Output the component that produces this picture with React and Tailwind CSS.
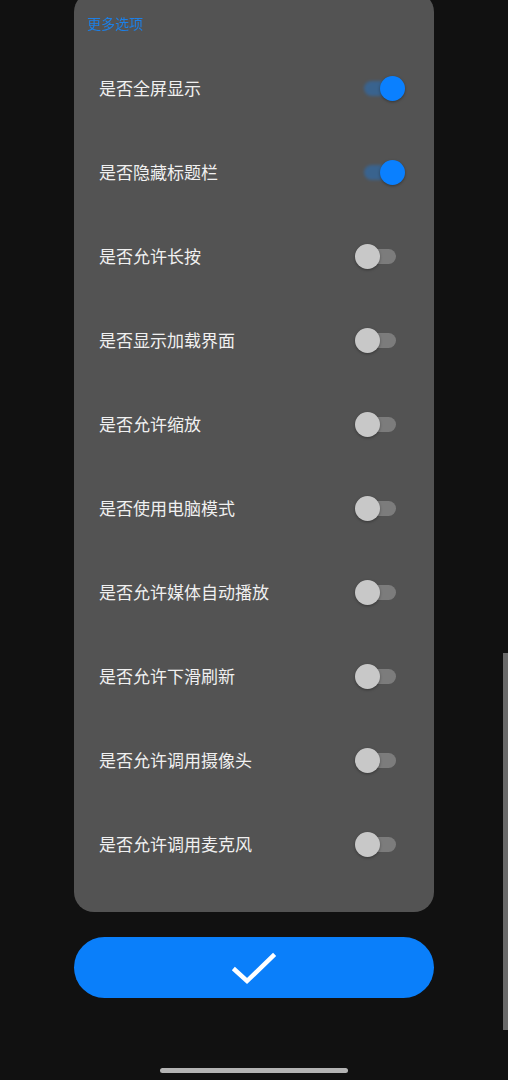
import React from "react";

const rows = [
  { label: "是否全屏显示", on: true },
  { label: "是否隐藏标题栏", on: true },
  { label: "是否允许长按", on: false },
  { label: "是否显示加载界面", on: false },
  { label: "是否允许缩放", on: false },
  { label: "是否使用电脑模式", on: false },
  { label: "是否允许媒体自动播放", on: false },
  { label: "是否允许下滑刷新", on: false },
  { label: "是否允许调用摄像头", on: false },
  { label: "是否允许调用麦克风", on: false },
];

function Toggle({ on }) {
  return (
    <div className="relative w-[36px] h-[15px]">
      {on ? (
        <>
          <div className="absolute left-[4px] top-0 w-[32px] h-[15px] rounded-full bg-[#2f6aa8] opacity-70 blur-[1.5px]" />
          <div className="absolute left-[20px] top-[-5px] w-[25px] h-[25px] rounded-full bg-[#0a80ff] shadow-[0_1px_3px_rgba(0,0,0,0.35)]" />
        </>
      ) : (
        <>
          <div className="absolute left-0 top-0 w-[36px] h-[15px] rounded-full bg-[#7c7c7c]" />
          <div className="absolute left-[-5px] top-[-5px] w-[25px] h-[25px] rounded-full bg-[#c8c8c8] shadow-[0_1px_3px_rgba(0,0,0,0.35)]" />
        </>
      )}
    </div>
  );
}

export default function App() {
  return (
    <div
      className="relative w-full h-[1080px] bg-[#111111] overflow-hidden flex flex-col items-center"
      style={{ fontFamily: '"Noto Sans CJK SC", "Noto Sans", sans-serif' }}
    >
      <div className="w-[360px] -mt-[8px] bg-[#535353] rounded-[20px] pt-[21px] pb-[27px]">
        <div className="pl-[13px] h-[20px] leading-[20px] text-[14px] text-[#1d7fe6] blur-[0.4px]">
          更多选项
        </div>
        <div className="mt-[12px] flex flex-col">
          {rows.map((r) => (
            <div key={r.label} className="h-[84px] flex items-center justify-between pl-[25px] pr-[38px]">
              <span className="text-[17px] text-[#f0f0f0] leading-none">{r.label}</span>
              <div className="mt-[2px]">
                <Toggle on={r.on} />
              </div>
            </div>
          ))}
        </div>
      </div>

      <button className="mt-[25px] w-[360px] h-[61px] rounded-full bg-[#0a7ffa] flex items-center justify-center">
        <svg width="48" height="36" viewBox="0 0 48 36">
          <path d="M5 20 L17 31 L43 6" fill="none" stroke="#ffffff" strokeWidth="4.5" strokeLinecap="square" strokeLinejoin="miter" />
        </svg>
      </button>

      <div className="mt-[70px] w-[188px] h-[5px] rounded-full bg-[#b4b4b4]" />

      <div className="absolute right-0 top-[653px] w-[5px] h-[377px] bg-[#6a6a6a]" />
    </div>
  );
}
